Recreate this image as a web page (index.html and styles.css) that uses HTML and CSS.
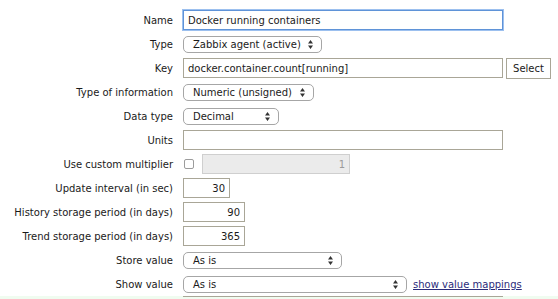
FILE: index.html
```html
<!DOCTYPE html>
<html>

<head>
	<title>Item</title>
	<link rel="stylesheet" href="styles.css">
</head>

<body>
	<form class="form-list">
		<label class="label">Name</label>
		<div class="field"><input class="text wide focus" type="text" value="Docker running containers"></div>

		<label class="label">Type</label>
		<div class="field">
			<div class="select w-type">Zabbix agent (active)
				<svg class="arrows" width="5" height="9" viewBox="0 0 5 9"><path d="M0 3.5L2.5 0L5 3.5ZM0 5.5L2.5 9L5 5.5Z" fill="#333"/></svg>
			</div>
		</div>

		<label class="label">Key</label>
		<div class="field">
			<input class="text wide" type="text" value="docker.container.count[running]">
			<button class="button" type="button">Select</button>
		</div>

		<label class="label">Type of information</label>
		<div class="field">
			<div class="select w-info">Numeric (unsigned)
				<svg class="arrows" width="5" height="9" viewBox="0 0 5 9"><path d="M0 3.5L2.5 0L5 3.5ZM0 5.5L2.5 9L5 5.5Z" fill="#333"/></svg>
			</div>
		</div>

		<label class="label">Data type</label>
		<div class="field">
			<div class="select w-data">Decimal
				<svg class="arrows" width="5" height="9" viewBox="0 0 5 9"><path d="M0 3.5L2.5 0L5 3.5ZM0 5.5L2.5 9L5 5.5Z" fill="#333"/></svg>
			</div>
		</div>

		<label class="label">Units</label>
		<div class="field"><input class="text wide" type="text" value=""></div>

		<label class="label">Use custom multiplier</label>
		<div class="field">
			<span class="checkbox"></span>
			<input class="text multiplier" type="text" value="1" disabled>
		</div>

		<label class="label">Update interval (in sec)</label>
		<div class="field"><input class="text num w-update" type="text" value="30"></div>

		<label class="label">History storage period (in days)</label>
		<div class="field"><input class="text num w-period" type="text" value="90"></div>

		<label class="label">Trend storage period (in days)</label>
		<div class="field"><input class="text num w-period" type="text" value="365"></div>

		<label class="label">Store value</label>
		<div class="field">
			<div class="select w-store">As is
				<svg class="arrows" width="5" height="9" viewBox="0 0 5 9"><path d="M0 3.5L2.5 0L5 3.5ZM0 5.5L2.5 9L5 5.5Z" fill="#333"/></svg>
			</div>
		</div>

		<label class="label">Show value</label>
		<div class="field">
			<div class="select w-show">As is
				<svg class="arrows" width="5" height="9" viewBox="0 0 5 9"><path d="M0 3.5L2.5 0L5 3.5ZM0 5.5L2.5 9L5 5.5Z" fill="#333"/></svg>
			</div>
			<a class="link" href="#">show value mappings</a>
		</div>

		<div class="new-row"><div class="new-edge"></div></div>
	</form>
</body>

</html>
```

FILE: styles.css
```css
body,
* {
	margin: 0;
	padding: 0;
	box-sizing: border-box;
}

body {
	font-family: "DejaVu Sans", Verdana, sans-serif;
	font-size: 10px;
	color: #1a1a1a;
	background: #fff;
	height: 100vh;
	overflow: hidden;
}

.form-list {
	display: grid;
	grid-template-columns: 173px 1fr;
	grid-auto-rows: 24px;
	column-gap: 10px;
	padding-top: 8px;
}

.label {
	display: flex;
	align-items: center;
	justify-content: flex-end;
	white-space: nowrap;
}

.field {
	display: flex;
	align-items: center;
	gap: 3px;
}

.text {
	font: inherit;
	color: #1a1a1a;
	height: 20px;
	border: 1px solid #a9a697;
	padding: 0 4px;
	background: #fff;
	outline: none;
}

.wide { width: 320px; }

.focus {
	border: 1px solid #5f93d8;
	box-shadow: 0 0 0 1px #9cc0ef;
}

.num { text-align: right; }
.w-update { width: 47px; }
.w-period { width: 62px; }

.multiplier {
	width: 148px;
	margin-left: 5px;
	text-align: right;
	background: #ebebeb;
	border-color: #cfcfcf;
	color: #9a9a9a;
}

.checkbox {
	display: block;
	width: 10px;
	height: 10px;
	margin-left: 1px;
	border: 1px solid #9c9c9c;
	border-radius: 2px;
	background: #fff;
}

.select {
	position: relative;
	height: 17px;
	line-height: 15px;
	padding-left: 9px;
	border: 1px solid #a6a6a6;
	border-radius: 5px;
	background: #fff;
	white-space: nowrap;
}

.arrows {
	position: absolute;
	right: 8px;
	top: 3px;
}

.w-type { width: 139px; }
.w-info { width: 131px; }
.w-data { width: 96px; }
.w-store { width: 159px; }
.w-show { width: 224px; }

.button {
	font: inherit;
	color: #1a1a1a;
	height: 21px;
	width: 45px;
	border: 1px solid #a9a697;
	background: #fff;
}

.link {
	margin-left: 3px;
	color: #2b2b7a;
	text-decoration: underline;
}

.new-row {
	grid-column: 1 / 3;
	background: #f0fcf0;
	padding-left: 183px;
}

.new-edge {
	width: 320px;
	border-top: 1px solid #a9a697;
}
```
